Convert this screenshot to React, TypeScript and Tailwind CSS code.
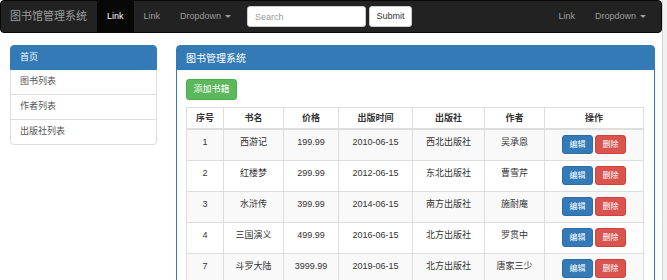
import React from 'react';

type Book = {
  id: number;
  name: string;
  price: string;
  date: string;
  press: string;
  author: string;
};

const books: Book[] = [
  { id: 1, name: '西游记', price: '199.99', date: '2010-06-15', press: '西北出版社', author: '吴承恩' },
  { id: 2, name: '红楼梦', price: '299.99', date: '2012-06-15', press: '东北出版社', author: '曹雪芹' },
  { id: 3, name: '水浒传', price: '399.99', date: '2014-06-15', press: '南方出版社', author: '施耐庵' },
  { id: 4, name: '三国演义', price: '499.99', date: '2016-06-15', press: '北方出版社', author: '罗贯中' },
  { id: 7, name: '斗罗大陆', price: '3999.99', date: '2019-06-15', press: '北方出版社', author: '唐家三少' },
];

const Caret = () => (
  <span className="ml-[4px] inline-block h-0 w-0 border-x-[3px] border-t-[3px] border-x-transparent border-t-[#9d9d9d] align-middle" />
);

const Navbar = () => (
  <nav className="flex h-[33px] items-stretch rounded-[4px] border border-[#080808] bg-[#222] pl-[9px] pr-[5px] text-[9px] text-[#9d9d9d]">
    <a className="flex items-center pr-[10px] text-[11px]">图书馆管理系统</a>
    <a className="flex items-center bg-[#080808] px-[10px] text-white">Link</a>
    <a className="flex items-center px-[10px]">Link</a>
    <a className="flex items-center px-[10px]">
      Dropdown
      <Caret />
    </a>
    <form className="ml-[6px] flex items-center gap-[3px]">
      <input
        placeholder="Search"
        className="h-[21px] w-[119px] rounded-[3px] border border-[#ccc] bg-white px-[7px] text-[9px] text-[#555] outline-none placeholder:text-[#999]"
      />
      <button type="button" className="h-[21px] w-[43px] rounded-[3px] border border-[#ccc] bg-white text-[9px] text-[#333]">
        Submit
      </button>
    </form>
    <div className="ml-auto flex items-stretch">
      <a className="flex items-center px-[10px]">Link</a>
      <a className="flex items-center px-[10px]">
        Dropdown
        <Caret />
      </a>
    </div>
  </nav>
);

const Sidebar = () => {
  const items = ['图书列表', '作者列表', '出版社列表'];
  return (
    <div className="w-[147px] shrink-0 text-[9px]">
      <div className="flex h-[25px] items-center rounded-t-[4px] border border-[#337ab7] bg-[#337ab7] px-[9px] text-white">首页</div>
      {items.map((item, i) => (
        <div
          key={item}
          className={`flex h-[25px] items-center border-x border-b border-[#ddd] bg-white px-[9px] text-[#555] ${
            i === items.length - 1 ? 'rounded-b-[4px]' : ''
          }`}
        >
          {item}
        </div>
      ))}
    </div>
  );
};

const BookTable = () => (
  <table className="w-[457px] table-fixed border-collapse border border-[#ddd] text-center text-[9px] leading-[13px] text-[#333]">
    <colgroup>
      <col className="w-[37px]" />
      <col className="w-[60px]" />
      <col className="w-[55px]" />
      <col className="w-[74px]" />
      <col className="w-[72px]" />
      <col className="w-[60px]" />
      <col className="w-[99px]" />
    </colgroup>
    <thead>
      <tr>
        {['序号', '书名', '价格', '出版时间', '出版社', '作者', '操作'].map((h) => (
          <th key={h} className="border border-b-2 border-[#ddd] pt-[4px] pb-[3px] font-bold">
            {h}
          </th>
        ))}
      </tr>
    </thead>
    <tbody>
      {books.map((b, i) => (
        <tr key={b.id} className={i % 2 === 0 ? 'bg-[#f9f9f9]' : 'bg-white'}>
          <td className="border border-[#ddd] pt-[6px] align-top">{b.id}</td>
          <td className="border border-[#ddd] pt-[6px] align-top">{b.name}</td>
          <td className="border border-[#ddd] pt-[6px] align-top">{b.price}</td>
          <td className="border border-[#ddd] pt-[6px] align-top">{b.date}</td>
          <td className="border border-[#ddd] pt-[6px] align-top">{b.press}</td>
          <td className="border border-[#ddd] pt-[6px] align-top">{b.author}</td>
          <td className="border border-[#ddd] pt-[5px] pb-[6px] align-top">
            <div className="flex justify-center gap-[2px]">
              <button type="button" className="h-[19px] w-[31px] rounded-[3px] border border-[#2e6da4] bg-[#337ab7] text-[8px] text-white">
                编辑
              </button>
              <button type="button" className="h-[19px] w-[31px] rounded-[3px] border border-[#d43f3a] bg-[#d9534f] text-[8px] text-white">
                删除
              </button>
            </div>
          </td>
        </tr>
      ))}
    </tbody>
  </table>
);

const MainPanel = () => (
  <div className="w-[479px] shrink-0 rounded-[4px] border border-[#337ab7] bg-white">
    <div className="flex h-[24px] items-center bg-[#337ab7] px-[9px] text-[10px] text-white">图书管理系统</div>
    <div className="px-[9px] pt-[9px]">
      <button type="button" className="mb-[7px] block h-[21px] w-[51px] rounded-[3px] border border-[#4cae4c] bg-[#5cb85c] text-[9px] text-white">
        添加书籍
      </button>
      <BookTable />
    </div>
  </div>
);

export default function App() {
  return (
    <div className="flex h-[280px] w-[667px] overflow-hidden bg-white font-['Liberation_Sans','Noto_Sans_CJK_SC',sans-serif]">
      <div className="w-[662px] shrink-0">
        <Navbar />
        <div className="mt-[12px] flex gap-[19px] pl-[10px]">
          <Sidebar />
          <MainPanel />
        </div>
      </div>
      <div className="flex-1 border-l border-[#d4d4d4] bg-[#f1f1f1]" />
    </div>
  );
}
